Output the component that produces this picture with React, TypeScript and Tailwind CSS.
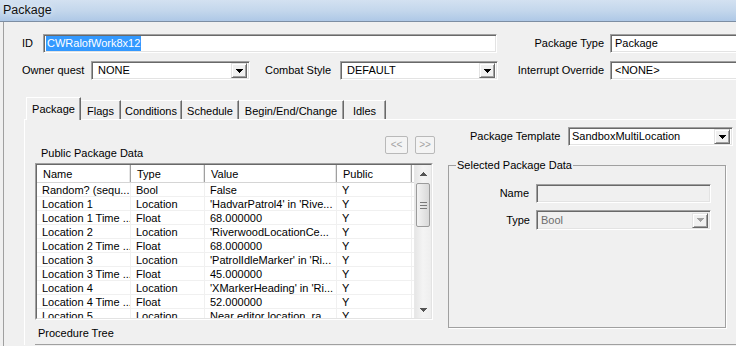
import React from "react";

const rows = [
  ["Random? (sequ...", "Bool", "False", "Y"],
  ["Location 1", "Location", "'HadvarPatrol4' in 'Rive...", "Y"],
  ["Location 1 Time ...", "Float", "68.000000", "Y"],
  ["Location 2", "Location", "'RiverwoodLocationCe...", "Y"],
  ["Location 2 Time ...", "Float", "68.000000", "Y"],
  ["Location 3", "Location", "'PatrolIdleMarker' in 'Ri...", "Y"],
  ["Location 3 Time ...", "Float", "45.000000", "Y"],
  ["Location 4", "Location", "'XMarkerHeading' in 'Ri...", "Y"],
  ["Location 4 Time ...", "Float", "52.000000", "Y"],
  ["Location 5", "Location", "Near editor location, ra...", "Y"],
];

const colWidths = ["w-[94px]", "w-[74px]", "w-[132px]", "w-[75px]"];

const tabs = [
  { label: "Package", width: "w-[55px]" },
  { label: "Flags", width: "w-[40px]" },
  { label: "Conditions", width: "w-[61px]" },
  { label: "Schedule", width: "w-[57px]" },
  { label: "Begin/End/Change", width: "w-[105px]" },
  { label: "Idles", width: "w-[42px]" },
];

const sunken =
  "border border-t-[#a0a0a0] border-l-[#a0a0a0] border-r-white border-b-white shadow-[inset_1px_1px_0_#696969,inset_-1px_-1px_0_#e3e3e3]";

function Arrow({ color = "#000" }: { color?: string }) {
  return (
    <svg width="7" height="4" viewBox="0 0 7 4" shapeRendering="crispEdges">
      <polygon points="0,0 7,0 3.5,4" fill={color} />
    </svg>
  );
}

function DropButton({ disabled }: { disabled?: boolean }) {
  return (
    <div className="mr-[2px] flex h-[15px] w-[16px] shrink-0 items-center justify-center border border-t-[#e3e3e3] border-l-[#e3e3e3] border-r-[#696969] border-b-[#696969] bg-[#f0f0f0] shadow-[inset_1px_1px_0_#fff,inset_-1px_-1px_0_#a0a0a0]">
      <Arrow color={disabled ? "#a0a0a0" : "#000"} />
    </div>
  );
}

function Combo({
  value,
  className,
  textClass = "pl-[6px]",
  disabled,
}: {
  value: string;
  className: string;
  textClass?: string;
  disabled?: boolean;
}) {
  return (
    <div
      className={`flex shrink-0 items-center ${sunken} ${className} ${
        disabled ? "bg-[#f0f0f0] text-[#6d6d6d]" : "bg-white"
      }`}
    >
      <span className={`flex-1 whitespace-nowrap ${textClass}`}>{value}</span>
      <DropButton disabled={disabled} />
    </div>
  );
}

export default function App() {
  return (
    <div className="flex h-[346px] w-[736px] flex-col overflow-hidden bg-[#f0f0f0] font-['Liberation_Sans',Arial,sans-serif] text-[11px] leading-none text-black">
      {/* title bar */}
      <div className="flex h-[22px] shrink-0 items-center border-b border-[#7d8ea3] bg-gradient-to-b from-[#d3e1f1] via-[#c4d7ec] to-[#aec8e6] pl-[3px] text-[12.5px] text-[#111] [text-shadow:0_0_6px_#fff]">
        Package
      </div>

      <div className="ml-[3px] flex-1 border-l border-[#a0a0a0]">
        {/* ID row */}
        <div className="mt-[12px] flex h-[19px] items-center pl-[18px]">
          <span className="w-[21px] shrink-0">ID</span>
          <div className={`flex h-full w-[454px] shrink-0 items-center bg-white pl-[2px] ${sunken}`}>
            <span className="bg-[#3399ff] px-px py-[2px] text-white">CWRalofWork8x12</span>
          </div>
          <span className="w-[113px] shrink-0 pr-[6px] text-right">Package Type</span>
          <div className={`flex h-full w-[140px] shrink-0 items-center bg-white pl-[4px] ${sunken}`}>
            Package
          </div>
        </div>

        {/* owner quest row */}
        <div className="mt-[8px] flex h-[19px] items-center pl-[18px]">
          <span className="w-[69px] shrink-0">Owner quest</span>
          <Combo value="NONE" className="h-full w-[159px]" />
          <span className="w-[90px] shrink-0 pr-[9px] text-right">Combat Style</span>
          <Combo value="DEFAULT" className="h-full w-[158px]" />
          <span className="w-[112px] shrink-0 pr-[6px] text-right">Interrupt Override</span>
          <div className={`flex h-full w-[140px] shrink-0 items-center bg-white pl-[4px] ${sunken}`}>
            &lt;NONE&gt;
          </div>
        </div>

        {/* tab control */}
        <div className="ml-[20px] mt-[17px]">
          <div className="flex h-[22px] items-end pl-[2px]">
            {tabs.map((t, i) =>
              i === 0 ? (
                <div
                  key={t.label}
                  className={`relative z-10 -mb-px flex h-[23px] shrink-0 items-center justify-center border-t border-l border-white bg-[#f0f0f0] shadow-[inset_-1px_0_0_#a0a0a0] border-r border-r-[#696969] ${t.width}`}
                >
                  {t.label}
                </div>
              ) : (
                <div
                  key={t.label}
                  className={`flex h-[19px] shrink-0 items-center justify-center border-t border-white pt-[2px] shadow-[inset_-1px_0_0_#a0a0a0] border-r border-r-[#696969] ${t.width}`}
                >
                  {t.label}
                </div>
              ),
            )}
          </div>

          <div className="border-t border-l border-white">
            <div className="flex items-start pl-[10px]">
              {/* left column */}
              <div className="w-[398px] shrink-0">
                <div className="mt-[16px] flex h-[27px] items-start">
                  <span className="mt-[12px] flex-1 pl-[6px]">Public Package Data</span>
                  <div className="-mr-[2px] flex gap-[7px]">
                    <div className="flex h-[18px] w-[23px] items-center justify-center rounded-[2px] border border-[#b9b9b9] bg-[#f4f4f4] text-[10px] text-[#a3a3a3]">
                      &lt;&lt;
                    </div>
                    <div className="flex h-[18px] w-[20px] items-center justify-center rounded-[2px] border border-[#b9b9b9] bg-[#f4f4f4] text-[10px] text-[#a3a3a3]">
                      &gt;&gt;
                    </div>
                  </div>
                </div>

                {/* list view */}
                <div className="h-[157px] border border-t-[#a0a0a0] border-l-[#a0a0a0] border-r-white border-b-white">
                  <div className="flex h-full border border-t-[#696969] border-l-[#696969] border-r-[#e3e3e3] border-b-[#e3e3e3] bg-white">
                    <div className="flex-1 overflow-hidden">
                      <div className="flex h-[18px] border-b border-[#d5d5d5]">
                        {["Name", "Type", "Value", "Public"].map((h, i) => (
                          <div
                            key={h}
                            className={`flex shrink-0 items-center border-r border-[#a0a0a0] pl-[6px] pt-px shadow-[inset_-1px_0_0_#e5e5e5] ${colWidths[i]}`}
                          >
                            {h}
                          </div>
                        ))}
                      </div>
                      {rows.map((r) => (
                        <div key={r[0] + r[2]} className="flex h-[14px] border-b border-[#f0f0f0]">
                          {r.map((c, i) => (
                            <div
                              key={i}
                              className={`flex shrink-0 items-center overflow-hidden whitespace-nowrap border-r border-[#f0f0f0] pl-[5px] pt-px ${colWidths[i]}`}
                            >
                              {c}
                            </div>
                          ))}
                        </div>
                      ))}
                    </div>

                    {/* scrollbar */}
                    <div className="flex w-[17px] shrink-0 flex-col border-l border-[#e8e8e8] bg-gradient-to-r from-[#e6e6e6] via-[#f4f4f4] to-[#eeeeee]">
                      <div className="flex h-[17px] items-center justify-center">
                        <svg width="7" height="4" viewBox="0 0 7 4" shapeRendering="crispEdges">
                          <polygon points="0,4 7,4 3.5,0" fill="#555" />
                        </svg>
                      </div>
                      <div className="mx-px mt-px flex h-[44px] flex-col items-center justify-center gap-[2px] rounded-[2px] border border-[#9b9b9b] bg-gradient-to-r from-[#f3f3f3] to-[#d9d9d9]">
                        <div className="h-px w-[7px] bg-[#7a7a7a]" />
                        <div className="h-px w-[7px] bg-[#7a7a7a]" />
                        <div className="h-px w-[7px] bg-[#7a7a7a]" />
                      </div>
                      <div className="flex-1" />
                      <div className="flex h-[17px] items-center justify-center">
                        <Arrow color="#555" />
                      </div>
                    </div>
                  </div>
                </div>

                <div className="flex h-[24px] items-center pl-[3px] pt-[2px]">Procedure Tree</div>
              </div>

              {/* right column */}
              <div className="ml-[15px] w-[285px] shrink-0">
                <div className="mt-[7px] flex h-[19px] items-center">
                  <span className="w-[120px] shrink-0 pl-[22px]">Package Template</span>
                  <Combo value="SandboxMultiLocation" className="h-full w-[165px]" textClass="pl-[3px]" />
                </div>

                <fieldset className="mt-[13px] h-[169px] w-[278px] border border-[#a0a0a0] shadow-[1px_1px_0_#fff]">
                  <legend className="ml-[7px] px-[1px] leading-[12px]">Selected Package Data</legend>
                  <div className="mt-[13px] flex h-[19px] items-center">
                    <span className="w-[87px] shrink-0 pr-[7px] text-right">Name</span>
                    <div className={`h-full w-[175px] shrink-0 bg-[#f0f0f0] ${sunken}`} />
                  </div>
                  <div className="mt-[7px] flex h-[20px] items-center">
                    <span className="w-[87px] shrink-0 pr-[6px] text-right">Type</span>
                    <Combo value="Bool" className="h-full w-[175px]" textClass="pl-[4px]" disabled />
                  </div>
                </fieldset>
              </div>
            </div>
            <div className="ml-[10px] border-t border-[#a0a0a0]" />
          </div>
        </div>
      </div>
    </div>
  );
}
